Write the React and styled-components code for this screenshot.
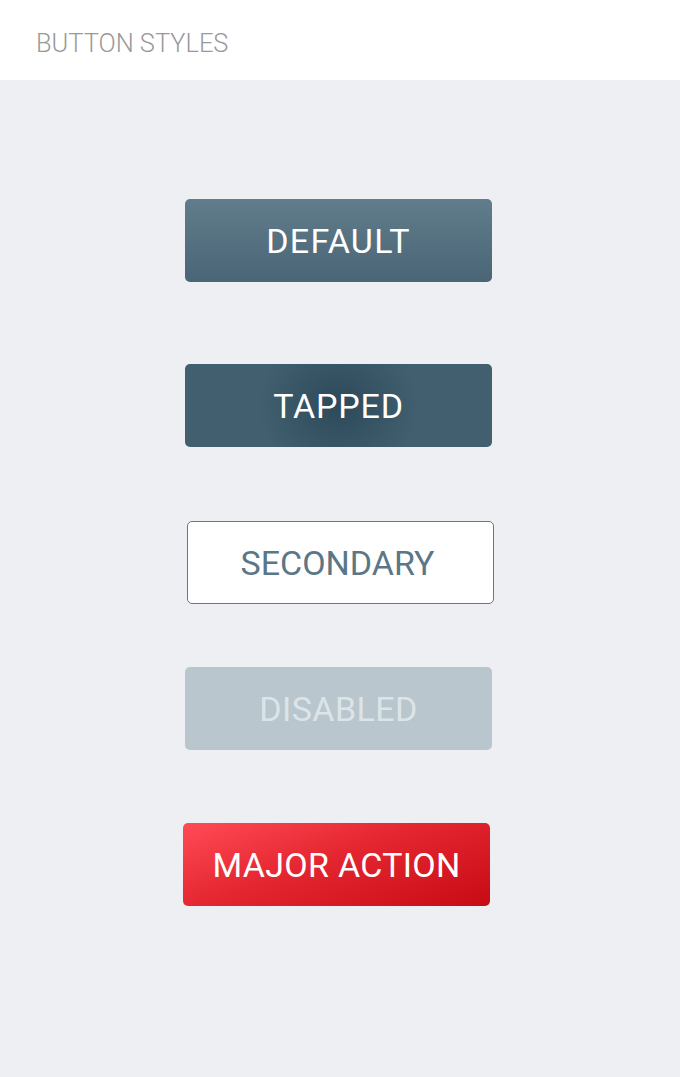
import React from 'react';
import styled, { createGlobalStyle, css } from 'styled-components';

const GlobalStyle = createGlobalStyle`
    html, body {
        margin: 0;
        padding: 0;
        background-color: #edeff2;
        font-family: Roboto, "Liberation Sans", sans-serif;
    }
`;

const Page = styled.div`
    min-height: 1077px;
    background-color: #edeff2;
`;

const Header = styled.header`
    height: 80px;
    background-color: #ffffff;
    display: flex;
    align-items: center;
    padding: 6px 0 0 36px;
    box-sizing: border-box;
`;

const Title = styled.h1`
    margin: 0;
    font-size: 25.4px;
    font-weight: 300;
    color: #999999;
`;

const List = styled.main`
    display: flex;
    flex-direction: column;
    padding-top: 119px;
`;

const variants = {
    default: css`
        background: linear-gradient(to bottom, #617c8a, #4a6576);
        color: #ffffff;
        letter-spacing: 1.3px;
    `,
    tapped: css`
        background:
            radial-gradient(ellipse 80px 75px at 50% 50%, rgba(40, 70, 86, 0.85), rgba(40, 70, 86, 0) 100%),
            #415f6f;
        color: #ffffff;
        letter-spacing: 0.8px;
    `,
    secondary: css`
        background: #ffffff;
        border: 1px solid #5f7a88;
        color: #5b7787;
        padding-right: 6px;
    `,
    disabled: css`
        background: #b9c6cd;
        color: #dde4e8;
        letter-spacing: 0.4px;
    `,
    major: css`
        background: linear-gradient(160deg, #ff4b56 0%, #e42630 45%, #c70b14 100%);
        color: #ffffff;
        letter-spacing: 0.3px;
    `,
};

const Button = styled.button`
    width: 307px;
    height: 83px;
    margin: ${({ $top }) => $top}px 0 0 ${({ $left }) => $left}px;
    border: none;
    border-radius: 5px;
    box-sizing: border-box;
    font-family: Roboto, "Liberation Sans", sans-serif;
    font-size: 34px;
    font-weight: 400;
    padding: 0;
    cursor: pointer;
    ${({ $variant }) => variants[$variant]}
`;

const buttons = [
    { label: 'DEFAULT', variant: 'default', top: 0, left: 185 },
    { label: 'TAPPED', variant: 'tapped', top: 82, left: 185 },
    { label: 'SECONDARY', variant: 'secondary', top: 74, left: 187 },
    { label: 'DISABLED', variant: 'disabled', top: 63, left: 185 },
    { label: 'MAJOR ACTION', variant: 'major', top: 73, left: 183 },
];

const App = () => {
    return (
        <Page>
            <GlobalStyle />
            <Header>
                <Title>BUTTON STYLES</Title>
            </Header>
            <List>
                {buttons.map((b) => (
                    <Button
                        key={b.label}
                        $variant={b.variant}
                        $top={b.top}
                        $left={b.left}
                        disabled={b.variant === 'disabled'}
                    >
                        {b.label}
                    </Button>
                ))}
            </List>
        </Page>
    );
};

export default App;
